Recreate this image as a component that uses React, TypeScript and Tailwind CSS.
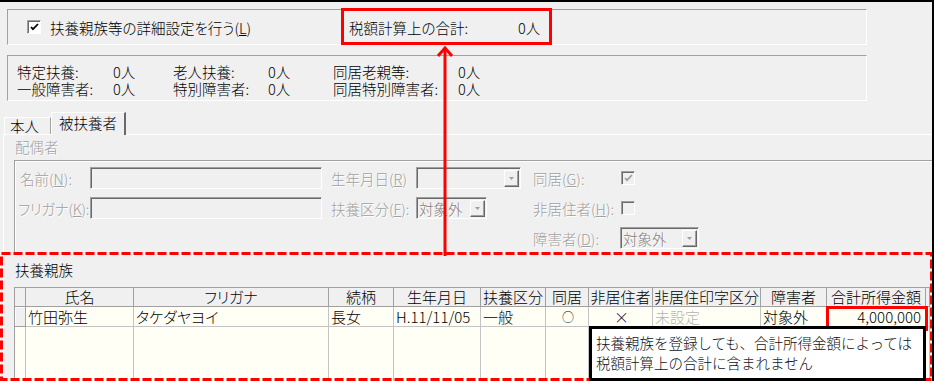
import React from "react";

const dis = "text-[#a0a0a0] [text-shadow:1px_1px_0_#ffffff]";

function Input() {
  return (
    <div className="w-[232px] h-[22px] border border-t-[#a0a0a0] border-l-[#a0a0a0] border-b-white border-r-white shadow-[inset_1px_1px_0_#696969]" />
  );
}

function Select({ className, text }: { className: string; text?: string }) {
  return (
    <div
      className={`${className} h-[22px] flex items-stretch border border-t-[#a0a0a0] border-l-[#a0a0a0] border-b-white border-r-white shadow-[inset_1px_1px_0_#696969] pl-[2px] pt-[2px] pr-[1px] pb-[1px]`}
    >
      <div className="flex-1 text-[#808080] leading-[17px] whitespace-nowrap">{text}</div>
      <div className="w-[15px] border border-t-white border-l-white border-b-[#696969] border-r-[#696969] bg-[#f0f0f0] shadow-[inset_-1px_-1px_0_#a0a0a0] flex items-center justify-center">
        <svg width="5" height="3" viewBox="0 0 5 3">
          <path d="M0 0h5L2.5 3z" fill="#a0a0a0" />
        </svg>
      </div>
    </div>
  );
}

function Check({ checked, disabled }: { checked?: boolean; disabled?: boolean }) {
  return (
    <div
      className={`w-[14px] h-[14px] border border-t-[#a0a0a0] border-l-[#a0a0a0] border-b-white border-r-white shadow-[inset_1px_1px_0_#696969] flex items-center justify-center ${
        disabled ? "bg-[#f0f0f0]" : "bg-white"
      }`}
    >
      {checked && (
        <svg width="9" height="8" viewBox="0 0 9 8">
          <path d="M1 4l2 2.2L8 1" fill="none" stroke={disabled ? "#a0a0a0" : "#000"} strokeWidth="1.8" />
        </svg>
      )}
    </div>
  );
}

const hdr = "bg-[#f0f0f0] border-r border-b border-[#a0a0a0] text-center leading-[18px] whitespace-nowrap";
const cell = "bg-[#fffff5] border-r border-b border-[#c4c4c4] leading-[19px] pl-[2px] whitespace-nowrap";
const fill = "bg-[#fffff5] border-r border-[#c4c4c4]";

export default function App() {
  return (
    <div className="relative w-[934px] h-[381px] overflow-hidden bg-[#f0f0f0] border-t-2 border-r-2 border-black font-['Noto_Sans_CJK_JP',sans-serif] font-light [font-feature-settings:'palt'] text-[14.5px] leading-[17px] text-black flex flex-col">
      {/* group box 1 */}
      <div className="ml-[7px] mt-[7px] w-[860px] h-[36px] shrink-0 border border-t-[#a0a0a0] border-l-[#a0a0a0] border-b-white border-r-white flex items-center">
        <div className="ml-[19px]">
          <Check checked />
        </div>
        <div className="ml-[9px] w-[299px] whitespace-nowrap">
          扶養親族等の詳細設定を行う(<span className="underline">L</span>)
        </div>
        <div className="flex whitespace-nowrap">
          <span className="w-[169px]">税額計算上の合計:</span>
          <span>0人</span>
        </div>
      </div>

      {/* group box 2 */}
      <div className="ml-[7px] mt-[10px] w-[860px] h-[46px] shrink-0 border border-t-[#a0a0a0] border-l-[#a0a0a0] border-b-white border-r-white pl-[9px] pt-[7px]">
        <div className="grid grid-cols-[96px_60px_95px_65px_125px_60px] grid-rows-[17px_17px] whitespace-nowrap">
          <span>特定扶養:</span>
          <span>0人</span>
          <span>老人扶養:</span>
          <span>0人</span>
          <span>同居老親等:</span>
          <span>0人</span>
          <span>一般障害者:</span>
          <span>0人</span>
          <span>特別障害者:</span>
          <span>0人</span>
          <span>同居特別障害者:</span>
          <span>0人</span>
        </div>
      </div>

      {/* tabs */}
      <div className="mt-[11px] h-[22px] shrink-0 pl-[4px] flex items-end relative z-10">
        <div className="w-[47px] h-[17px] border-t border-l border-white border-r border-r-[#a0a0a0] pl-[5px] leading-[16px]">
          本人
        </div>
        <div className="w-[75px] h-[23px] -mb-px bg-[#f0f0f0] border-t border-l border-white border-r-2 border-r-[#696969] text-center leading-[19px]">
          被扶養者
        </div>
      </div>

      {/* panel */}
      <div className="ml-[3px] flex-1 flex flex-col border-t border-l border-white pl-[10px] min-h-0">
        <div className={`ml-[1px] mt-[3px] h-[17px] ${dis}`}>配偶者</div>
        <div className="mt-[5px] h-[92px] shrink-0 border-t border-l border-[#a0a0a0] shadow-[inset_1px_1px_0_#ffffff] pl-[5px] pt-[6px]">
          <div className={`grid grid-cols-[70px_241px_85px_117px_87px_1fr] grid-rows-[22px_22px_22px] gap-y-[8px] items-center whitespace-nowrap ${dis}`}>
            <span>
              名前(<span className="underline">N</span>):
            </span>
            <Input />
            <span>
              生年月日(<span className="underline">R</span>)
            </span>
            <Select className="w-[105px]" />
            <span>
              同居(<span className="underline">G</span>):
            </span>
            <div className="ml-[1px]">
              <Check checked disabled />
            </div>

            <span className="-ml-[2px] tracking-[-0.3px]">
              フリガナ(<span className="underline">K</span>):
            </span>
            <Input />
            <span>
              扶養区分(<span className="underline">F</span>):
            </span>
            <Select className="w-[71px]" text="対象外" />
            <span>
              非居住者(<span className="underline">H</span>):
            </span>
            <div className="ml-[1px]">
              <Check disabled />
            </div>

            <span />
            <span />
            <span />
            <span />
            <span>
              障害者(<span className="underline">D</span>):
            </span>
            <Select className="w-[79px]" text="対象外" />
          </div>
        </div>

        <div className="ml-[1px] mt-[9px] h-[17px] shrink-0">扶養親族</div>

        <div className="mt-[9px] flex-1 mr-[2px] grid grid-cols-[11px_108px_195px_65px_87px_65px_43px_64px_108px_66px_99px_1fr] grid-rows-[19px_20px_1fr] border-t border-l border-[#a0a0a0] text-[15px]">
          <div className={hdr} />
          <div className={hdr}>氏名</div>
          <div className={hdr}>フリガナ</div>
          <div className={hdr}>続柄</div>
          <div className={hdr}>生年月日</div>
          <div className={hdr}>扶養区分</div>
          <div className={hdr}>同居</div>
          <div className={hdr}>非居住者</div>
          <div className={hdr}>非居住印字区分</div>
          <div className={hdr}>障害者</div>
          <div className={hdr}>合計所得金額</div>
          <div className={hdr} />

          <div className="bg-[#f0f0f0] border-r border-b border-[#a0a0a0] shadow-[inset_1px_1px_0_#ffffff]" />
          <div className={cell}>竹田弥生</div>
          <div className={cell}>タケダヤヨイ</div>
          <div className={cell}>長女</div>
          <div className={cell}>H.11/11/05</div>
          <div className={cell}>一般</div>
          <div className={`${cell} text-center pl-0 text-[12px]`}>○</div>
          <div className={`${cell} text-center pl-0`}>×</div>
          <div className={`${cell} text-[#b4b4b4]`}>未設定</div>
          <div className={cell}>対象外</div>
          <div className={`${cell} text-right pr-[4px]`}>4,000,000</div>
          <div className={cell} />

          <div className={fill} />
          <div className={fill} />
          <div className={fill} />
          <div className={fill} />
          <div className={fill} />
          <div className={fill} />
          <div className={fill} />
          <div className={fill} />
          <div className={fill} />
          <div className={fill} />
          <div className={fill} />
          <div className={fill} />
        </div>
      </div>

      {/* annotations */}
      <div className="absolute left-[341px] top-[6px] w-[211px] h-[37px] border-[3px] border-[#ff0000]" />
      <svg className="absolute left-[436px] top-[42px]" width="18" height="212" viewBox="0 0 18 212">
        <line x1="9" y1="4" x2="9" y2="212" stroke="#ff0000" strokeWidth="3" />
        <polyline points="2,12 9,4 16,12" fill="none" stroke="#ff0000" strokeWidth="3" />
      </svg>
      <svg className="absolute left-0 top-[250px]" width="934" height="129" viewBox="0 0 934 129">
        <rect x="1.5" y="1.5" width="930" height="126" fill="none" stroke="#ff0000" strokeWidth="3" strokeDasharray="9 3" />
      </svg>
      <div className="absolute left-[826px] top-[304px] w-[102px] h-[25px] border-[3px] border-[#ff0000]" />
      <div className="absolute left-[589px] top-[324px] w-[337px] h-[55px] border-[3px] border-black bg-white pl-[4px] pt-[4px] leading-[20px] text-[#101020] text-[14.5px] [font-feature-settings:normal] whitespace-nowrap">
        扶養親族を登録しても、合計所得金額によっては
        <br />
        税額計算上の合計に含まれません
      </div>
    </div>
  );
}
